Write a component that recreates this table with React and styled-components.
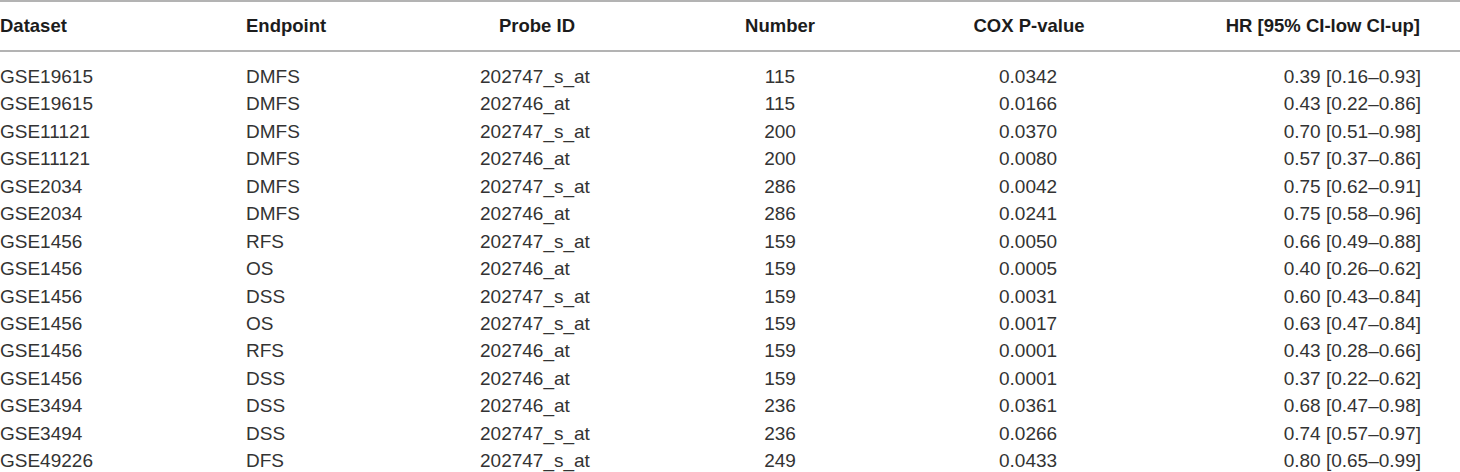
import React from 'react'
import styled, { createGlobalStyle } from 'styled-components'

const GlobalStyle = createGlobalStyle`
  html, body {
    margin: 0;
    padding: 0;
    background: #ffffff;
  }
  body {
    font-family: "Liberation Sans", Arial, Helvetica, sans-serif;
  }
`

const columns = [
  { key: 'dataset', label: 'Dataset', width: 246, head: 'left', cell: 'left' },
  { key: 'endpoint', label: 'Endpoint', width: 200, head: 'left', cell: 'left' },
  { key: 'probe', label: 'Probe ID', width: 182, head: 'center', cell: 'left', padLeft: 34 },
  { key: 'number', label: 'Number', width: 304, head: 'center', cell: 'center' },
  { key: 'pvalue', label: 'COX P-value', width: 194, head: 'center', cell: 'left', padLeft: 67 },
  { key: 'hr', label: 'HR [95% CI-low CI-up]', width: 334, head: 'right', cell: 'right', padRight: 39 },
]

const rows = [
  ['GSE19615', 'DMFS', '202747_s_at', '115', '0.0342', '0.39 [0.16–0.93]'],
  ['GSE19615', 'DMFS', '202746_at', '115', '0.0166', '0.43 [0.22–0.86]'],
  ['GSE11121', 'DMFS', '202747_s_at', '200', '0.0370', '0.70 [0.51–0.98]'],
  ['GSE11121', 'DMFS', '202746_at', '200', '0.0080', '0.57 [0.37–0.86]'],
  ['GSE2034', 'DMFS', '202747_s_at', '286', '0.0042', '0.75 [0.62–0.91]'],
  ['GSE2034', 'DMFS', '202746_at', '286', '0.0241', '0.75 [0.58–0.96]'],
  ['GSE1456', 'RFS', '202747_s_at', '159', '0.0050', '0.66 [0.49–0.88]'],
  ['GSE1456', 'OS', '202746_at', '159', '0.0005', '0.40 [0.26–0.62]'],
  ['GSE1456', 'DSS', '202747_s_at', '159', '0.0031', '0.60 [0.43–0.84]'],
  ['GSE1456', 'OS', '202747_s_at', '159', '0.0017', '0.63 [0.47–0.84]'],
  ['GSE1456', 'RFS', '202746_at', '159', '0.0001', '0.43 [0.28–0.66]'],
  ['GSE1456', 'DSS', '202746_at', '159', '0.0001', '0.37 [0.22–0.62]'],
  ['GSE3494', 'DSS', '202746_at', '236', '0.0361', '0.68 [0.47–0.98]'],
  ['GSE3494', 'DSS', '202747_s_at', '236', '0.0266', '0.74 [0.57–0.97]'],
  ['GSE49226', 'DFS', '202747_s_at', '249', '0.0433', '0.80 [0.65–0.99]'],
]

const Page = styled.div`
  width: 1460px;
  height: 472px;
  overflow: hidden;
  background: #fff;
`

const Table = styled.table`
  width: 1460px;
  border-collapse: collapse;
  table-layout: fixed;
`

const HeadCell = styled.th`
  height: 48px;
  padding: 0 ${p => p.$padRight || 0}px 0 0;
  border-top: 2px solid #b3b3b3;
  border-bottom: 2px solid #b3b3b3;
  text-align: ${p => p.$align};
  vertical-align: middle;
  font-size: 18.5px;
  font-weight: 700;
  color: #1c1c1c;
  white-space: nowrap;
`

const Row = styled.tr`
  &:first-child td {
    padding-top: 11px;
  }
`

const Cell = styled.td`
  height: 27.43px;
  line-height: 27.43px;
  padding: 0 ${p => p.$padRight || 0}px 0 ${p => p.$padLeft || 0}px;
  text-align: ${p => p.$align};
  font-size: 19px;
  color: #333;
  white-space: nowrap;
`

export default function App() {
  return (
    <Page>
      <GlobalStyle />
      <Table>
        <colgroup>
          {columns.map(c => <col key={c.key} style={{ width: c.width }} />)}
        </colgroup>
        <thead>
          <tr>
            {columns.map(c => (
              <HeadCell key={c.key} $align={c.head} $padRight={c.head === 'right' ? 40 : 0}>
                {c.label}
              </HeadCell>
            ))}
          </tr>
        </thead>
        <tbody>
          {rows.map((r, i) => (
            <Row key={i}>
              {r.map((v, j) => (
                <Cell
                  key={j}
                  $align={columns[j].cell}
                  $padLeft={columns[j].padLeft}
                  $padRight={columns[j].padRight}
                >
                  {v}
                </Cell>
              ))}
            </Row>
          ))}
        </tbody>
      </Table>
    </Page>
  )
}
